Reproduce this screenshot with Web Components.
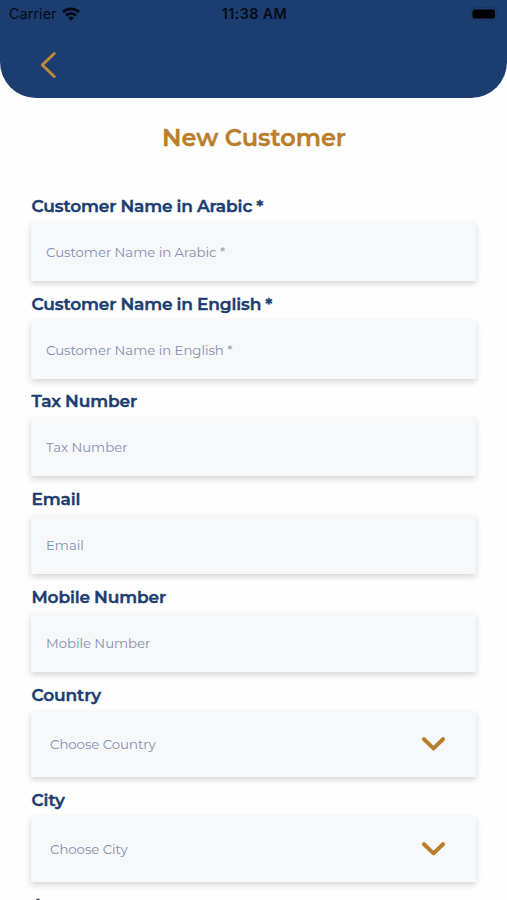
<!DOCTYPE html>
<html lang="en">
<head>
<meta charset="utf-8">
<title>New Customer</title>
<style>
  body {
    margin: 0;
    height: 900px;
    overflow: hidden;
    background: #fefefe;
    font-family: Montserrat, Inter, "Open Sans", sans-serif;
  }
</style>
</head>
<body>
<customer-screen>
  <app-header slot="header"></app-header>
  <span slot="title">New Customer</span>
  <form-field label="Customer Name in Arabic *" placeholder="Customer Name in Arabic *"></form-field>
  <form-field label="Customer Name in English *" placeholder="Customer Name in English *"></form-field>
  <form-field label="Tax Number" placeholder="Tax Number"></form-field>
  <form-field label="Email" placeholder="Email"></form-field>
  <form-field label="Mobile Number" placeholder="Mobile Number"></form-field>
  <form-field select label="Country" placeholder="Choose Country"></form-field>
  <form-field select label="City" placeholder="Choose City"></form-field>
  <form-field select label="Area"></form-field>
</customer-screen>

<template id="status-bar">
  <style>
    :host {
      display: grid;
      grid-template-columns: 1fr auto 1fr;
      align-items: center;
      height: 27px;
      padding: 0 7px 0 9px;
      color: #050b16;
      font: 500 14.3px/27px Inter, sans-serif;
    }
    .carrier { display: flex; align-items: center; gap: 5px; font-weight: 400; letter-spacing: 0.1px; }
    .time { font-weight: 600; letter-spacing: 0.4px; }
    .battery { justify-self: end; }
    svg { display: block; }
  </style>
  <div class="carrier">
    <span>Carrier</span>
    <svg width="18" height="14" viewBox="0 0 18 14" fill="none" stroke="currentColor" stroke-width="2.7">
      <path d="M1 5.1a11.3 11.3 0 0 1 16 0" />
      <path d="M4 8.5a7 7 0 0 1 10 0" />
      <path d="M9 13.8 6.2 10.9a4 4 0 0 1 5.6 0z" fill="currentColor" stroke="none" />
    </svg>
  </div>
  <div class="time">11:38 AM</div>
  <svg class="battery" width="29" height="14" viewBox="0 0 29 14">
    <rect x="0.5" y="0.5" width="25" height="13" rx="4" fill="none" stroke="#18365f" />
    <rect x="1.5" y="2.5" width="22.5" height="9" rx="2" fill="#000" />
    <path d="M27 5q1.5 2 0 4z" fill="#18365f" />
  </svg>
</template>

<template id="app-header">
  <style>
    :host {
      display: flex;
      flex-direction: column;
      height: 98.4px;
      border-radius: 0 0 36px 36px;
      background: #1c3d70;
    }
    .nav { display: flex; flex: 1; padding: 24px 0 0 39.5px; }
    svg { display: block; }
  </style>
  <status-bar></status-bar>
  <div class="nav">
    <svg width="17" height="28" viewBox="0 0 17 28" fill="none" stroke="#c18a35" stroke-width="2.9" stroke-linecap="round" stroke-linejoin="round">
      <path d="M14.3 2.5 2.3 14 14.3 25.5" />
    </svg>
  </div>
</template>

<template id="customer-screen">
  <style>
    :host { display: block; }
    h1 {
      margin: 0;
      height: 91.6px;
      box-sizing: border-box;
      padding: 24.5px 0 0 1px;
      font-size: 24px;
      font-weight: 600;
      line-height: 30px;
      text-align: center;
      color: #b97e2b;
      -webkit-text-stroke: 0.4px #b97e2b;
    }
    main { display: flex; flex-direction: column; padding: 0 31px; }
  </style>
  <slot name="header"></slot>
  <h1><slot name="title"></slot></h1>
  <main><slot></slot></main>
</template>

<template id="form-field">
  <style>
    :host { display: block; height: 97.75px; }
    :host([select]) { height: 105.2px; }
    .label {
      height: 32px;
      box-sizing: border-box;
      padding: 4px 0 0 0.5px;
      font-size: 17px;
      font-weight: 600;
      line-height: 24px;
      letter-spacing: -0.12px;
      word-spacing: -0.5px;
      white-space: nowrap;
      color: #1c3d70;
      -webkit-text-stroke: 0.4px #1c3d70;
    }
    .box {
      display: flex;
      align-items: center;
      justify-content: space-between;
      height: 59px;
      box-sizing: border-box;
      padding: 1px 30px 0 15px;
      background: #f6f8fa;
      box-shadow: 0 3px 6px rgba(0, 0, 0, 0.16);
      font-size: 13.3px;
      letter-spacing: -0.05px;
      color: #868fae;
    }
    :host([select]) .box { height: 66px; padding-left: 19px; }
    svg { display: none; }
    :host([select]) svg { display: block; }
  </style>
  <div class="label"></div>
  <div class="box">
    <span class="placeholder"></span>
    <svg width="25" height="16" viewBox="0 0 25 16" fill="none" stroke="#b97e2b" stroke-width="4" stroke-linecap="round" stroke-linejoin="round">
      <path d="M3 3.2 12.5 12.4 22 3.2" />
    </svg>
  </div>
</template>

<script>
  class TemplateElement extends HTMLElement {
    constructor() {
      super();
      const template = document.getElementById(this.localName);
      this.attachShadow({ mode: "open" });
      this.shadowRoot.appendChild(template.content.cloneNode(true));
    }
  }

  class StatusBar extends TemplateElement {}
  class AppHeader extends TemplateElement {}
  class CustomerScreen extends TemplateElement {}

  class FormField extends TemplateElement {
    connectedCallback() {
      this.shadowRoot.querySelector(".label").textContent = this.getAttribute("label");
      this.shadowRoot.querySelector(".placeholder").textContent = this.getAttribute("placeholder") || "";
    }
  }

  customElements.define("status-bar", StatusBar);
  customElements.define("app-header", AppHeader);
  customElements.define("customer-screen", CustomerScreen);
  customElements.define("form-field", FormField);
</script>
</body>
</html>
